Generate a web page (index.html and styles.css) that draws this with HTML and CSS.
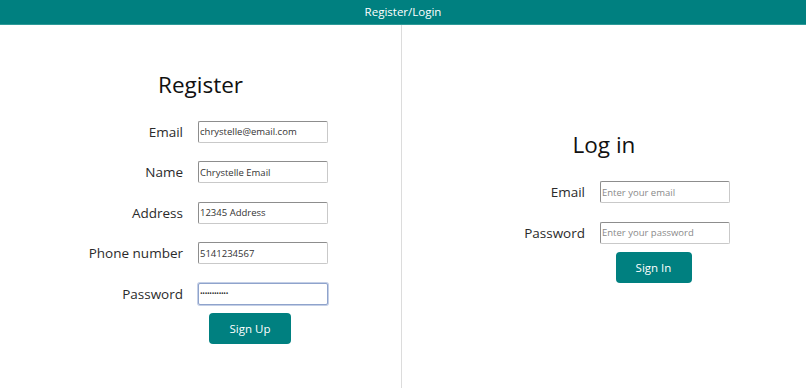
FILE: index.html
```html
<!DOCTYPE html>
<html lang="en">

<head>
    <meta charset="UTF-8">
    <meta name="viewport" content="width=device-width, initial-scale=1.0">
    <title>Register/Login</title>
    <link rel="stylesheet" href="styles.css">
</head>

<body>
    <header class="topbar">Register/Login</header>

    <main class="panels">
        <section class="panel">
            <div class="panel-inner">
                <h1>Register</h1>
                <form class="form">
                    <div class="form-row">
                        <label for="reg_email">Email</label>
                        <input type="email" id="reg_email" value="chrystelle@email.com">
                    </div>
                    <div class="form-row">
                        <label for="reg_name">Name</label>
                        <input type="text" id="reg_name" value="Chrystelle Email">
                    </div>
                    <div class="form-row">
                        <label for="reg_address">Address</label>
                        <input type="text" id="reg_address" value="12345 Address">
                    </div>
                    <div class="form-row">
                        <label for="reg_phone">Phone number</label>
                        <input type="text" id="reg_phone" value="5141234567">
                    </div>
                    <div class="form-row last">
                        <label for="reg_password">Password</label>
                        <input type="password" id="reg_password" class="focused" value="chrystelle12">
                    </div>
                    <div class="form-actions">
                        <button type="submit" class="btn-signup">Sign Up</button>
                    </div>
                </form>
            </div>
        </section>

        <section class="panel">
            <div class="panel-inner">
                <h1>Log in</h1>
                <form class="form">
                    <div class="form-row">
                        <label for="login_email">Email</label>
                        <input type="email" id="login_email" placeholder="Enter your email">
                    </div>
                    <div class="form-row last">
                        <label for="login_password">Password</label>
                        <input type="password" id="login_password" placeholder="Enter your password">
                    </div>
                    <div class="form-actions">
                        <button type="submit" class="btn-signin">Sign In</button>
                    </div>
                </form>
            </div>
        </section>
    </main>
</body>

</html>
```

FILE: styles.css
```css
* {
    box-sizing: border-box;
}

html,
body {
    height: 100%;
}

body {
    margin: 0;
    font-family: "Open Sans", Arial, sans-serif;
    color: #1a1a1a;
    background-color: #ffffff;
    display: flex;
    flex-direction: column;
}

.topbar {
    height: 25px;
    line-height: 24px;
    background-color: #008080;
    border-bottom: 1px solid #2e9a98;
    color: #ffffff;
    text-align: center;
    font-size: 11.5px;
}

.panels {
    flex: 1;
    display: flex;
}

.panel {
    flex: 1;
    display: flex;
    flex-direction: column;
    justify-content: center;
}

.panel:first-child {
    flex: 0 0 402px;
    border-right: 1px solid #dcdcdc;
}

h1 {
    margin: 0 0 21px;
    font-size: 22.5px;
    font-weight: 400;
    line-height: 30px;
    text-align: center;
    color: #111111;
}

.form-row {
    display: grid;
    grid-template-columns: 198px 130px;
    align-items: center;
    margin-bottom: 18.5px;
}

.form-row.last {
    margin-bottom: 8px;
}

label {
    text-align: right;
    padding-right: 15px;
    font-size: 13.5px;
    color: #2b2b2b;
}

input {
    width: 130px;
    height: 22px;
    padding: 0 1px;
    border: 1px solid #c9c9c9;
    border-top-color: #8d8d8d;
    border-left-color: #8d8d8d;
    border-radius: 2px;
    font-family: "Open Sans", Arial, sans-serif;
    font-size: 9.5px;
    color: #333333;
    background-color: #ffffff;
}

input::placeholder {
    color: #8a8a8a;
}

input.focused {
    border: 1px solid #8fa3cc;
    box-shadow: 0 0 0 1px #c4cfe6;
    font-size: 7px;
    letter-spacing: -0.3px;
}

.form-actions {
    display: flex;
    justify-content: center;
    padding-left: 99px;
}

button {
    height: 31px;
    padding: 0 20px;
    border: none;
    border-radius: 4px;
    background-color: #008080;
    color: #ffffff;
    font-family: "Open Sans", Arial, sans-serif;
    font-size: 11.5px;
    cursor: pointer;
}

.btn-signup {
    width: 82px;
}

.btn-signin {
    width: 76px;
}
```
